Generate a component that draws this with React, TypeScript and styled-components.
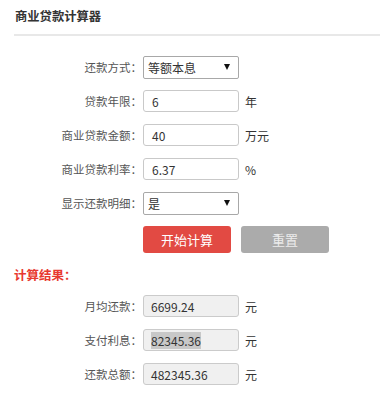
import React from "react";
import styled, { createGlobalStyle } from "styled-components";

const Global = createGlobalStyle`
  html, body { margin: 0; padding: 0; background: #fff; }
  body { font-family: "Noto Sans CJK SC", "Noto Sans", sans-serif; color: #333; }
  * { box-sizing: border-box; }
`;

const Page = styled.div`
  width: 380px;
  height: 400px;
  padding-left: 14px;
  overflow: hidden;
`;

const Header = styled.div`
  height: 36px;
  border-bottom: 2px solid #e8e8e8;
  display: flex;
  align-items: center;
  padding: 0 0 2px 1px;
`;

const Title = styled.h1`
  margin: 0;
  font-size: 12.3px;
  font-weight: bold;
  color: #333;
`;

const Form = styled.div`
  padding-top: 14px;
`;

const Row = styled.div`
  height: 34px;
  display: grid;
  grid-template-columns: 129px 96px auto;
  align-items: center;
`;

const Label = styled.label`
  font-size: 11.5px;
  color: #555;
  text-align: right;
  white-space: nowrap;
  padding-right: 1px;
`;

const Field = styled.div<{ $h?: number }>`
  height: ${(p) => p.$h ?? 22}px;
  border: 1px solid #c9c9c9;
  border-radius: 3px;
  display: flex;
  align-items: center;
  padding-left: 8px;
  font-size: 12px;
  color: #333;
  background: #fff;
`;

const Select = styled(Field)`
  border-color: #a8a8a8;
  padding: 0 8px 0 4px;
  justify-content: space-between;
  border-radius: 2px;
`;

const Arrow = styled.span`
  width: 0;
  height: 0;
  border-left: 3.5px solid transparent;
  border-right: 3.5px solid transparent;
  border-top: 6px solid #111;
`;

const ReadOnly = styled(Field)`
  background: #f0f0f0;
  border-color: #cbcbcb;
  padding-left: 7px;
`;

const Selected = styled.span`
  background: #c8c8c8;
  line-height: 17px;
`;

const Unit = styled.span`
  font-size: 12px;
  color: #333;
  padding-left: 6px;
`;

const Buttons = styled.div`
  margin-top: 6px;
  padding-left: 129px;
  display: flex;
  gap: 10px;
`;

const Button = styled.button<{ $primary?: boolean }>`
  width: 88px;
  height: 27px;
  border: none;
  border-radius: 3px;
  font-family: inherit;
  font-size: 13px;
  color: ${(p) => (p.$primary ? "#fff" : "#ececec")};
  background: ${(p) => (p.$primary ? "#e24a43" : "#ababab")};
  padding: 0;
`;

const ResultTitle = styled.div`
  margin-top: 13px;
  font-size: 12.5px;
  line-height: 17px;
  font-weight: bold;
  color: #e8392f;
`;

const Results = styled.div`
  margin-top: 6px;
`;

export default function App() {
  return (
    <Page>
      <Global />
      <Header>
        <Title>商业贷款计算器</Title>
      </Header>
      <Form>
        <Row>
          <Label>还款方式：</Label>
          <Select $h={23}>
            <span>等额本息</span>
            <Arrow />
          </Select>
        </Row>
        <Row>
          <Label>贷款年限：</Label>
          <Field>6</Field>
          <Unit>年</Unit>
        </Row>
        <Row>
          <Label>商业贷款金额：</Label>
          <Field>40</Field>
          <Unit>万元</Unit>
        </Row>
        <Row>
          <Label>商业贷款利率：</Label>
          <Field>6.37</Field>
          <Unit>%</Unit>
        </Row>
        <Row>
          <Label>显示还款明细：</Label>
          <Select $h={23}>
            <span>是</span>
            <Arrow />
          </Select>
        </Row>
        <Buttons>
          <Button $primary>开始计算</Button>
          <Button>重置</Button>
        </Buttons>
      </Form>
      <ResultTitle>计算结果：</ResultTitle>
      <Results>
        <Row>
          <Label>月均还款：</Label>
          <ReadOnly>6699.24</ReadOnly>
          <Unit>元</Unit>
        </Row>
        <Row>
          <Label>支付利息：</Label>
          <ReadOnly>
            <Selected>82345.36</Selected>
          </ReadOnly>
          <Unit>元</Unit>
        </Row>
        <Row>
          <Label>还款总额：</Label>
          <ReadOnly>482345.36</ReadOnly>
          <Unit>元</Unit>
        </Row>
      </Results>
    </Page>
  );
}
